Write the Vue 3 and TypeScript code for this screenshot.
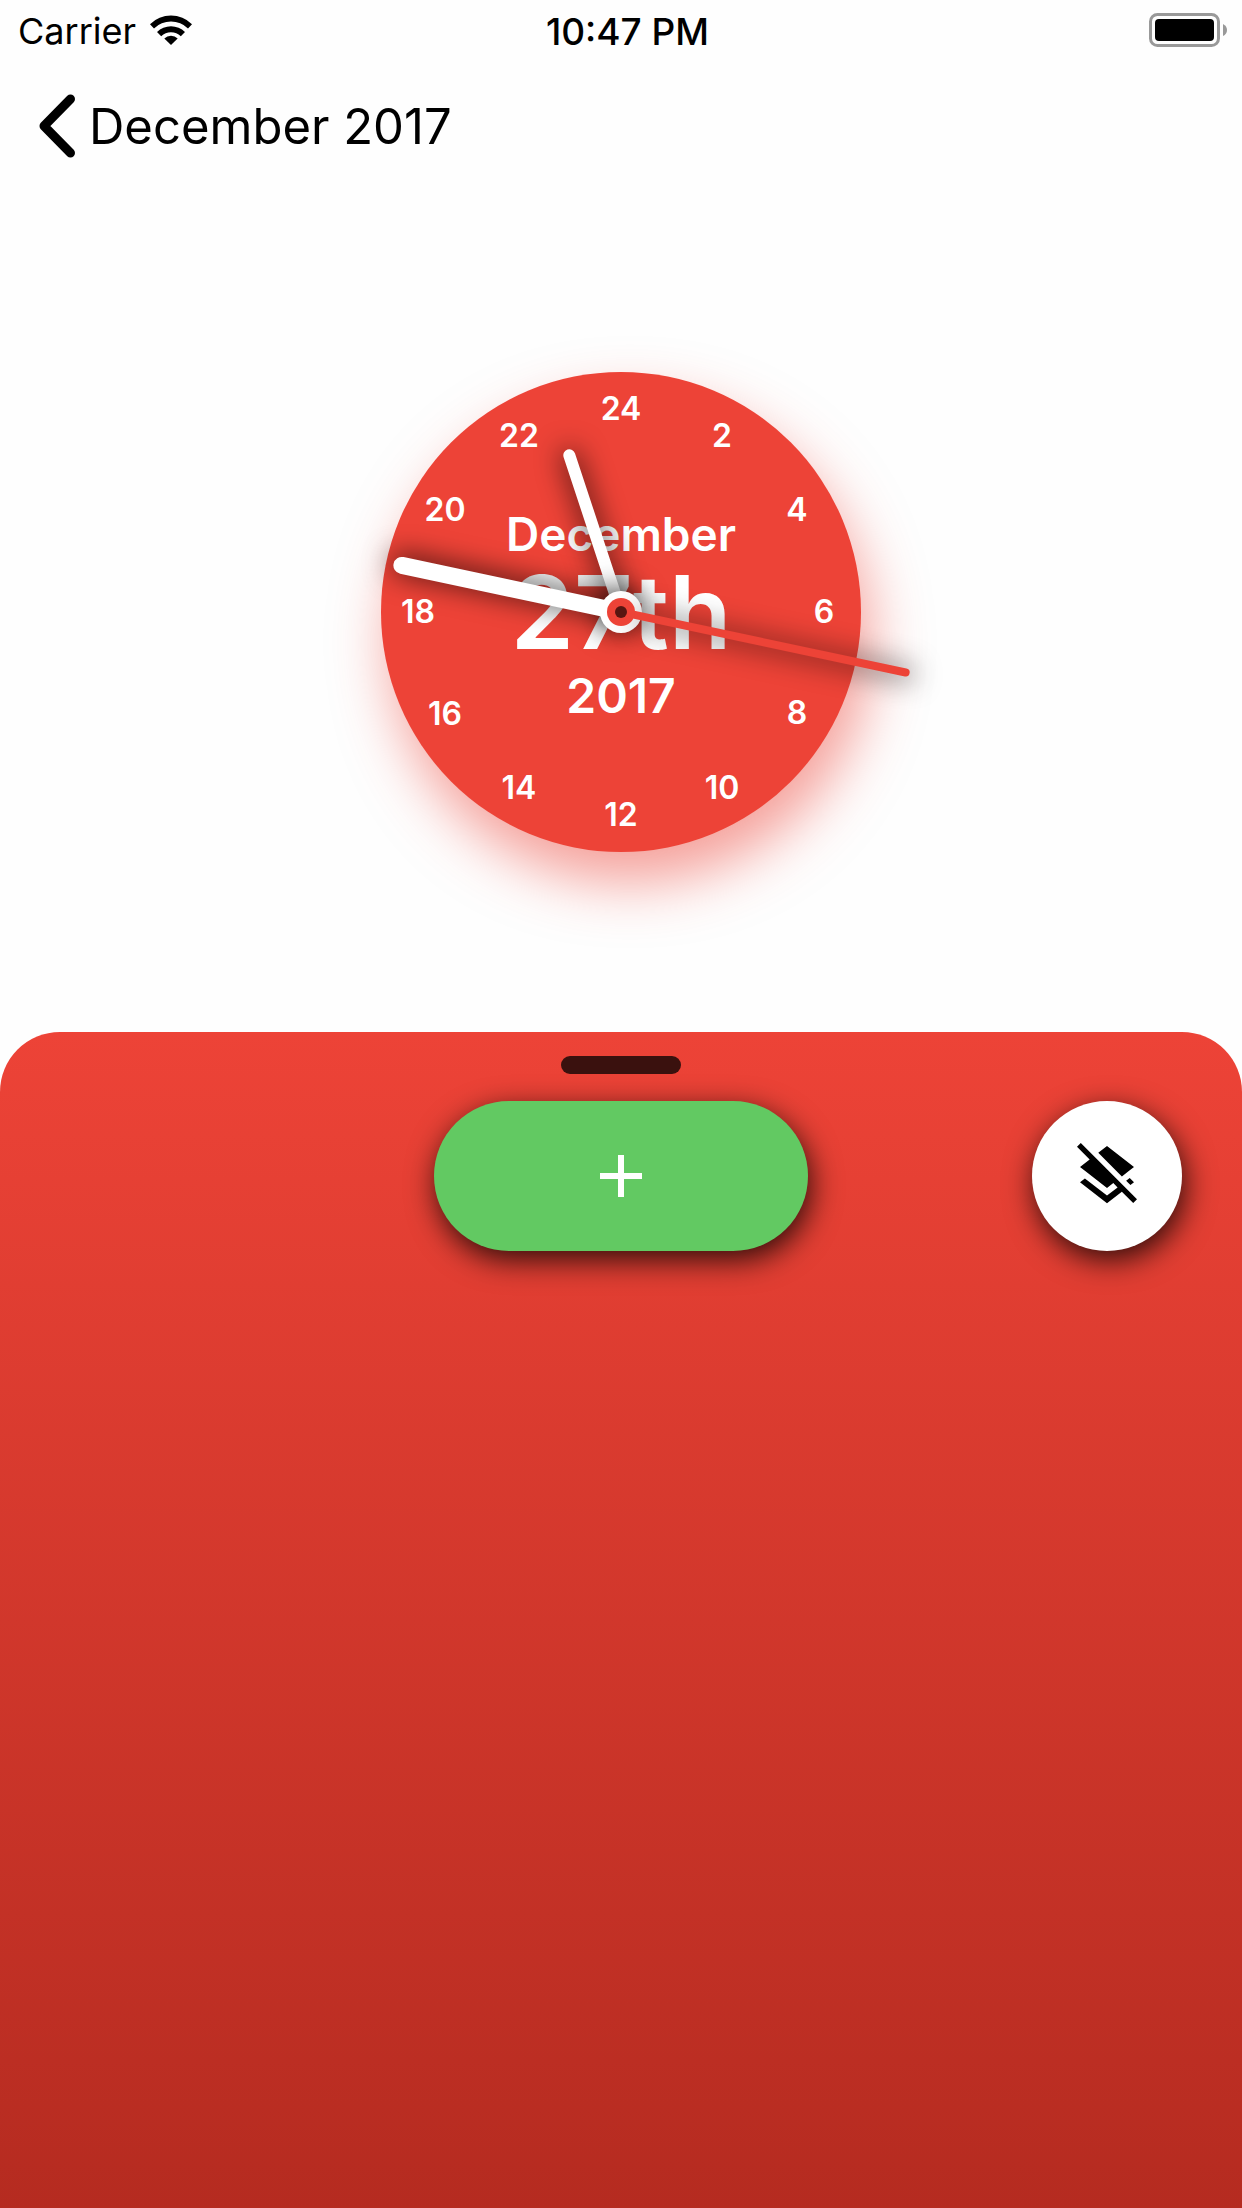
<script setup lang="ts">
interface Numeral {
  label: string
  x: number
  y: number
}

const numeralRadius = 203
const hours = [24, 2, 4, 6, 8, 10, 12, 14, 16, 18, 20, 22]

const numerals: Numeral[] = hours.map((hour) => {
  const angle = (hour / 24) * Math.PI * 2
  return {
    label: String(hour),
    x: Math.round(Math.sin(angle) * numeralRadius),
    y: Math.round(-Math.cos(angle) * numeralRadius),
  }
})

const time = { hours: 22, minutes: 47, seconds: 17 }
const hourAngle = (time.hours + time.minutes / 60) * 15
const minuteAngle = time.minutes * 6
const secondAngle = time.seconds * 6
</script>

<template>
  <div class="screen">
    <header class="status">
      <div class="status-side">
        <span class="carrier">Carrier</span>
        <svg class="wifi" viewBox="0 0 42 30" aria-label="Wi-Fi">
          <path d="M0 9.2a30 30 0 0 1 42 0l-4 4.200a24.500 24.500 0 0 0-34 0z" />
          <path d="M7 17a19.800 19.800 0 0 1 28 0l-4.200 4.200a14 14 0 0 0-19.600 0z" />
          <path d="M14.300 23.600a9.500 9.500 0 0 1 13.400 0L21 30z" />
        </svg>
      </div>
      <time class="clock-time">10:47 PM</time>
      <div class="status-side status-end">
        <svg class="battery" viewBox="0 0 78 34" aria-label="Battery full">
          <rect x="1.500" y="1.500" width="68" height="31" rx="7" fill="none" stroke="#999" stroke-width="3" />
          <rect x="6" y="6" width="59" height="22" rx="4" />
          <path d="M74 11q4 2 4 6t-4 6z" fill="#999" />
        </svg>
      </div>
    </header>

    <nav class="nav">
      <button class="back" type="button">
        <svg class="chevron" viewBox="0 0 36 64" aria-hidden="true">
          <path d="M31.500 5L5 32l26.500 27" />
        </svg>
        <span>December 2017</span>
      </button>
    </nav>

    <main class="clock-area">
      <div class="clock">
        <span
          v-for="n in numerals"
          :key="n.label"
          class="numeral"
          :style="{ transform: `translate(${n.x}px, ${n.y}px)` }"
        >{{ n.label }}</span>
        <div class="date">
          <span class="month">December</span>
          <span class="day">27th</span>
          <span class="year">2017</span>
        </div>
        <svg class="hands" viewBox="-240 -240 480 480" aria-hidden="true">
          <g class="hand hour">
            <line y2="-165" :transform="`rotate(${hourAngle})`" />
          </g>
          <g class="hand minute">
            <line y2="-224" :transform="`rotate(${minuteAngle})`" />
            <circle r="21" />
          </g>
          <g class="hand second">
            <line y1="-14" y2="-291" :transform="`rotate(${secondAngle})`" />
          </g>
          <circle class="hub" r="14" />
          <circle class="pin" r="6" />
        </svg>
      </div>
    </main>

    <section class="panel">
      <div class="handle"></div>
      <div class="actions">
        <button class="add" type="button" aria-label="Add">
          <svg class="icon" viewBox="0 0 24 24"><path d="M19 13h-6v6h-2v-6H5v-2h6V5h2v6h6z" /></svg>
        </button>
        <button class="layers" type="button" aria-label="Clear layers">
          <svg class="icon" viewBox="0 0 24 24">
            <path d="M19.810 14.990l1.190-.92-1.430-1.430-1.190.92 1.430 1.430zm-.45-4.720L21 9l-9-7-2.910 2.270 7.870 7.880 2.400-1.880zM3.270 1L2 2.270l4.220 4.220L3 9l1.630 1.270L12 16l2.100-1.630 1.430 1.430L12 18.540l-7.370-5.730L3 14.070l9 7 4.950-3.850L20.730 21 22 19.730 3.270 1z" />
          </svg>
        </button>
      </div>
    </section>
  </div>
</template>

<style>
body {
  background: #fefefe;
}
</style>

<style scoped>
.screen {
  display: flex;
  flex-direction: column;
  min-height: 100vh;
  overflow: hidden;
  background: #fefefe;
  color: #000;
  font-family: Inter, "Liberation Sans", sans-serif;
}

button {
  border: 0;
  padding: 0;
  font: inherit;
  color: inherit;
  cursor: pointer;
}

svg {
  display: block;
}

.status {
  display: flex;
  align-items: center;
  height: 60px;
  padding: 0 15px 0 18px;
  font-size: 36px;
}

.status-side {
  display: flex;
  flex: 1;
  align-items: center;
  gap: 14px;
}

.status-end {
  justify-content: flex-end;
}

.carrier,
.clock-time {
  padding-top: 2px;
}

.clock-time {
  padding-left: 10px;
  font-size: 37px;
  font-weight: 500;
}

.wifi {
  width: 42px;
  height: 30px;
}

.battery {
  width: 78px;
  height: 34px;
}

.nav {
  display: flex;
  align-items: center;
  height: 132px;
  padding: 0 39px;
}

.back {
  display: flex;
  align-items: center;
  gap: 14px;
  background: none;
  font-size: 49px;
}

.chevron {
  width: 36px;
  height: 64px;
  fill: none;
  stroke: #000;
  stroke-width: 9;
  stroke-linecap: round;
  stroke-linejoin: round;
}

.clock-area {
  display: flex;
  align-items: center;
  justify-content: center;
  height: 840px;
}

.clock {
  display: grid;
  place-items: center;
  width: 480px;
  height: 480px;
  border-radius: 50%;
  background: #ed4337;
  box-shadow: 9px 30px 56px rgba(237, 67, 55, 0.5);
  color: #fff;
}

.clock > * {
  grid-area: 1 / 1;
}

.numeral {
  font-size: 32px;
  line-height: 38px;
  font-weight: 600;
}

.date {
  display: flex;
  flex-direction: column;
  align-items: center;
  padding-top: 8px;
  font-weight: 600;
}

.month {
  font-size: 46px;
  line-height: 56px;
}

.day {
  font-size: 102px;
  line-height: 100px;
}

.year {
  margin-top: 4px;
  font-size: 48px;
  line-height: 60px;
}

.hands {
  width: 480px;
  height: 480px;
  overflow: visible;
}

.hand {
  fill: #fff;
  stroke-linecap: round;
}

.hand line {
  stroke: #fff;
}

.hour {
  filter: drop-shadow(0 0 14px rgba(0, 0, 0, 0.9));
}

.hour line {
  stroke-width: 12;
}

.minute {
  filter: drop-shadow(-2px -2px 14px rgba(0, 0, 0, 0.8));
}

.minute line {
  stroke-width: 17;
}

.second {
  filter: drop-shadow(4px 2px 14px rgba(0, 0, 0, 0.9));
}

.second line {
  stroke: #ed4337;
  stroke-width: 8;
}

.hub {
  fill: #ed4337;
}

.pin {
  fill: #571611;
}

.panel {
  display: flex;
  flex: 1;
  flex-direction: column;
  align-items: center;
  gap: 27px;
  padding: 24px 60px;
  border-radius: 60px 60px 0 0;
  background: linear-gradient(#ed4337, #b52b20);
}

.handle {
  width: 120px;
  height: 18px;
  border-radius: 9px;
  background: #3a110e;
}

.actions {
  display: grid;
  grid-template-columns: 1fr 374px 1fr;
  align-self: stretch;
}

.add,
.layers {
  display: flex;
  align-items: center;
  justify-content: center;
  height: 150px;
  border-radius: 75px;
  box-shadow: 3px 9px 30px rgba(0, 0, 0, 0.8);
}

.add {
  grid-column: 2;
  background: #62c962;
  color: #fff;
}

.layers {
  justify-self: end;
  width: 150px;
  background: #fff;
  color: #000;
}

.icon {
  width: 72px;
  height: 72px;
  fill: currentColor;
}
</style>
